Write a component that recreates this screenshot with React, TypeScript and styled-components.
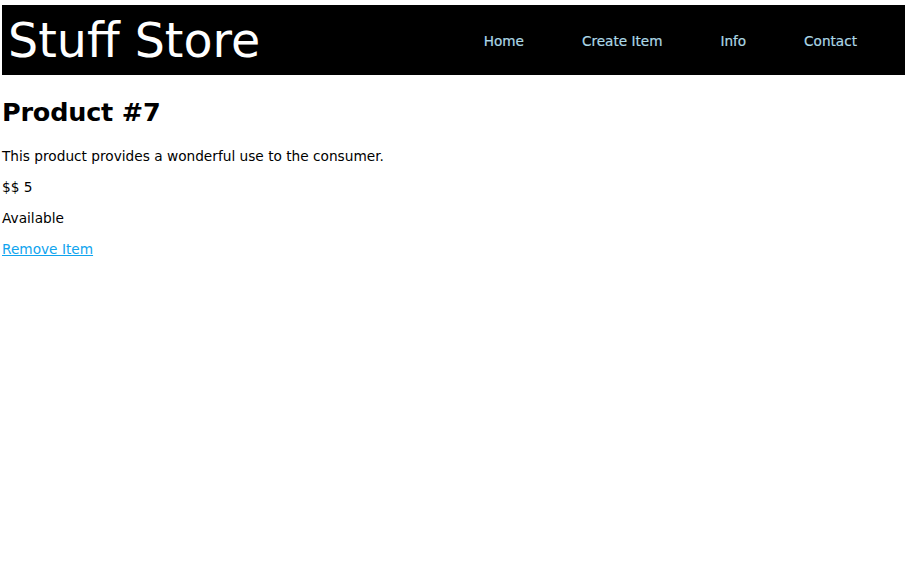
import React from 'react'
import styled, { createGlobalStyle } from 'styled-components'

const GlobalStyle = createGlobalStyle`
  html, body {
    margin: 0;
    padding: 0;
    background: #fff;
  }
  body {
    padding: 5px 0 0 2px;
    font-family: "DejaVu Sans", "Liberation Sans", sans-serif;
    font-size: 13.7px;
    color: #000;
  }
`

const Header = styled.header`
  display: flex;
  align-items: center;
  justify-content: space-between;
  height: 70px;
  background: #000;
  padding: 0 48px 0 6px;
`

const Brand = styled.div`
  color: #fff;
  font-size: 47.5px;
  line-height: 1;
  padding-top: 1px;
`

const Nav = styled.nav`
  display: flex;
  align-items: center;
  gap: 58px;
  padding-top: 2px;
`

const NavLink = styled.a`
  color: #add8e6;
  font-size: 13.6px;
  text-decoration: none;
  -webkit-text-stroke: 0.2px #add8e6;
`

const Main = styled.main`
  padding-top: 1px;
`

const Title = styled.h1`
  margin: 20px 0 20px;
  font-size: 25.5px;
  font-weight: bold;
  line-height: 32px;
  letter-spacing: -0.2px;
`

const Para = styled.p`
  margin: 0 0 14px;
  line-height: 17px;
`

const RemoveLink = styled.a`
  color: #10a4ee;
  text-decoration: underline;
`

export default function App() {
  return (
    <>
      <GlobalStyle />
      <Header>
        <Brand>Stuff Store</Brand>
        <Nav>
          <NavLink href="#">Home</NavLink>
          <NavLink href="#">Create Item</NavLink>
          <NavLink href="#">Info</NavLink>
          <NavLink href="#">Contact</NavLink>
        </Nav>
      </Header>
      <Main>
        <Title>Product #7</Title>
        <Para>This product provides a wonderful use to the consumer.</Para>
        <Para>$$ 5</Para>
        <Para>Available</Para>
        <Para>
          <RemoveLink href="#">Remove Item</RemoveLink>
        </Para>
      </Main>
    </>
  )
}
